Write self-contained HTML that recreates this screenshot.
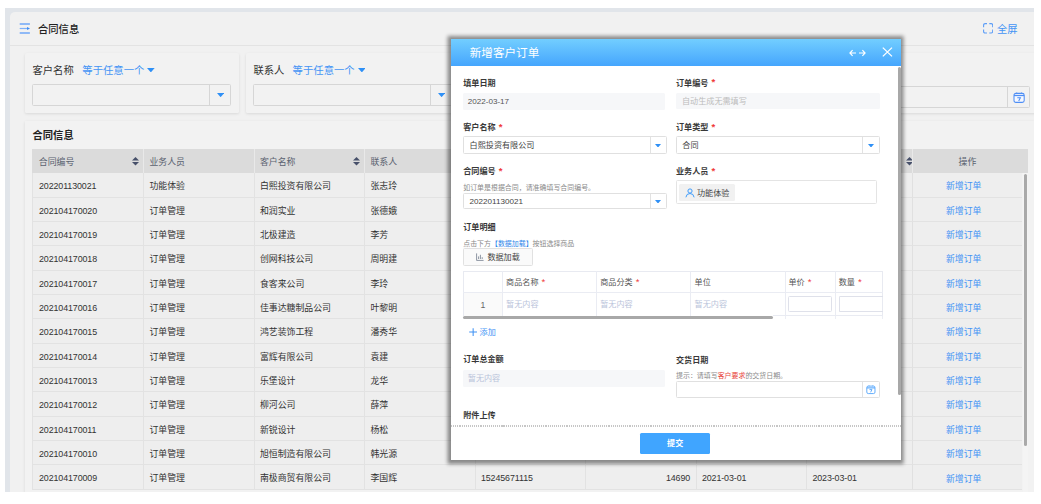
<!DOCTYPE html>
<html lang="zh-CN">
<head>
<meta charset="utf-8">
<title>合同信息</title>
<style>
*{box-sizing:border-box;margin:0;padding:0}
html,body{width:1041px;height:504px;overflow:hidden;background:#fff}
body{position:relative;font-family:"Liberation Sans","Noto Sans CJK SC",sans-serif;color:#333;font-size:8.9px;line-height:1}
.abs{position:absolute}
#app{position:absolute;left:5px;top:8px;width:1029px;height:483.5px;background:#e1e5ea;overflow:hidden}
#panel{position:absolute;left:5px;top:4px;right:0;bottom:0;background:#f1f1f1;border-top-left-radius:5px}
#stage{position:absolute;left:-5px;top:-8px;width:1041px;height:504px}
.t{position:absolute;white-space:nowrap;line-height:12px;height:12px}
.blue{color:#4494f5}
.hline{position:absolute;left:10px;right:7px;top:45px;height:1px;background:#e3e3e3}
.card{position:absolute;top:52.5px;height:60.8px;width:213.7px;background:#f2f2f2;box-shadow:0 1px 3px rgba(0,0,0,.10);border-radius:1.5px}
.sel{position:absolute;border:1px solid #d6d6d6;border-radius:1.5px;background:transparent}
.sel i{position:absolute;top:0;bottom:0;width:1px;background:#d6d6d6}
#tcard{position:absolute;left:25px;top:121px;width:1010px;height:380px;background:#f2f2f2;box-shadow:0 1px 3px rgba(0,0,0,.10)}
#thead{position:absolute;left:32.4px;top:149px;width:995.5px;height:23.6px;background:#dbdbdb}
#thead .c{position:absolute;top:0;height:23.6px;border-left:1px solid #e9e9e9;color:#5a6270;padding-left:5.4px;line-height:26.2px}
#thead .c:first-child{border-left:none;padding-left:6.4px}
.row{position:absolute;left:32.4px;width:990px;height:24.35px;background:#eeeeee;border-bottom:1px solid #e2e2e2;border-left:1px solid #e2e2e2}
.row span{position:absolute;top:0;height:24.35px;line-height:26.2px;border-left:1px solid #e2e2e2;padding-left:5.4px;white-space:nowrap}
.row span:first-child{border-left:none;padding-left:5.6px}
.n{letter-spacing:-0.1px}
#modal{position:absolute;left:451px;top:39px;width:450px;height:421px;background:#fff;box-shadow:0 .5px 3.7px 3.2px rgba(0,0,0,.43)}
#mhead{position:absolute;left:0;top:0;right:0;height:27px;background:linear-gradient(#72ceff,#45a5fd)}
#modal .t{font-size:8.1px}
.lb{font-weight:bold;color:#383838}
.req{color:#f03a3a;font-weight:bold;margin-left:.9px;font-size:9.6px;line-height:0;position:relative;top:-.3px}
.dis{position:absolute;background:#f6f7f9;border-radius:1.5px}
.msel{position:absolute;border:1px solid #e0e0e0;border-radius:1.5px;background:#fff}
.msel i{position:absolute;top:0;bottom:0;width:1px;background:#e2e2e2}
.hint{font-size:6.95px !important;color:#8a8a8a}
.ph{color:#b9c3da}
</style>
</head>
<body>
<div id="app"><div id="panel"></div>
<div id="stage">
<svg class="abs" style="left:19.2px;top:22.1px" width="12" height="12.4" viewBox="0 0 12 12.4"><g stroke="#6fa7f8" stroke-width="1.5" fill="none"><path d="M0.7 2H10.9M0.7 11H10.9"/></g><path d="M0.7 6.5H8.5" stroke="#7db0f9" stroke-width="1.2"/><path d="M8 4.9L11 6.5L8 8.1Z" fill="#3f8cf3"/></svg>
<div class="t" style="left:38px;top:23.5px;font-size:10.3px;font-weight:500;color:#222">合同信息</div>
<div class="hline"></div>
<svg class="abs" style="left:983px;top:23px" width="10.4" height="10.7" viewBox="0 0 10.4 10.7"><path d="M0.6 4.2V2.2Q0.6 0.6 2.2 0.6H4M6.3 0.6H8.1Q9.7 0.6 9.7 2.2V4.2M9.7 6.4V8.4Q9.7 10 8.1 10H6.3M4 10H2.2Q0.6 10 0.6 8.4V6.4" stroke="#5c9df7" stroke-width="1.1" fill="none"/></svg>
<div class="t blue" style="left:997px;top:23.5px;font-size:10.3px">全屏</div>
<div class="card" style="left:25px;width:213.7px"></div>
<div class="card" style="left:246px;width:213.7px"></div>
<div class="card" style="left:467px;width:213.7px"></div>
<div class="card" style="left:688px;width:360px"></div>
<div class="t" style="left:32.5px;top:64.9px;font-size:10.3px">客户名称</div>
<div class="t blue" style="left:82.3px;top:64.9px;font-size:10.35px">等于任意一个</div>
<svg class="abs" style="left:147.3px;top:67.6px" width="7.699999999999989" height="4.400000000000006" viewBox="0 0 7.699999999999989 4.400000000000006"><polygon points="0,0 7.699999999999989,0 3.8499999999999943,4.400000000000006" fill="#2f90f6"/></svg>
<div class="sel" style="left:32.4px;top:84px;width:198.8px;height:22px"><i style="left:175.3px"></i></div>
<svg class="abs" style="left:216.8px;top:93px" width="7.199999999999989" height="4.200000000000003" viewBox="0 0 7.199999999999989 4.200000000000003"><polygon points="0,0 7.199999999999989,0 3.5999999999999943,4.200000000000003" fill="#2f90f6"/></svg>
<div class="t" style="left:253.5px;top:64.9px;font-size:10.3px">联系人</div>
<div class="t blue" style="left:292.6px;top:64.9px;font-size:10.35px">等于任意一个</div>
<svg class="abs" style="left:357.8px;top:67.6px" width="7.699999999999989" height="4.400000000000006" viewBox="0 0 7.699999999999989 4.400000000000006"><polygon points="0,0 7.699999999999989,0 3.8499999999999943,4.400000000000006" fill="#2f90f6"/></svg>
<div class="sel" style="left:253.3px;top:84px;width:198.8px;height:22px"><i style="left:175.3px"></i></div>
<svg class="abs" style="left:437.6px;top:93px" width="7.199999999999989" height="4.200000000000003" viewBox="0 0 7.199999999999989 4.200000000000003"><polygon points="0,0 7.199999999999989,0 3.5999999999999943,4.200000000000003" fill="#2f90f6"/></svg>
<div class="sel" style="left:831.3px;top:86px;width:198.6px;height:22px"><i style="left:174.4px"></i></div>
<svg class="abs" style="left:1013.4px;top:91.6px" width="12.4" height="11.4" viewBox="0 0 12.4 11.4"><rect x="1" y="1.4" width="10.2" height="9" rx="1.9" fill="#f7f9ff" stroke="#4f8ff5" stroke-width="1.05"/><path d="M1 3.5H11.2" stroke="#4f8ff5" stroke-width="1.3"/><path d="M3.7 0.5V1.6M8.5 0.5V1.6" stroke="#4f8ff5" stroke-width="0.9"/><path d="M4.3 5.7H7.4L5.7 8.9" stroke="#4f8ff5" stroke-width="1.05" fill="none"/></svg>
<div id="tcard"></div>
<div class="t" style="left:32.5px;top:130.2px;font-size:10.3px;font-weight:bold;color:#222">合同信息</div>
<div id="thead"><div class="c" style="left:0.00px;width:110.65px">合同编号</div><div class="c" style="left:110.65px;width:110.50px">业务人员</div><div class="c" style="left:221.15px;width:110.50px">客户名称</div><div class="c" style="left:331.65px;width:110.50px">联系人</div><div class="c" style="left:442.15px;width:110.50px"></div><div class="c" style="left:552.65px;width:110.50px"></div><div class="c" style="left:663.15px;width:110.50px"></div><div class="c" style="left:773.65px;width:110.50px"></div><div class="c" style="left:884.15px;width:110.50px"></div></div>
<svg class="abs" style="left:131.8px;top:157px" width="7.0" height="3.5999999999999943" viewBox="0 0 7.0 3.5999999999999943"><polygon points="0,3.5999999999999943 3.5,0 7.0,3.5999999999999943" fill="#47506a"/></svg>
<svg class="abs" style="left:131.8px;top:162px" width="7.0" height="3.5999999999999943" viewBox="0 0 7.0 3.5999999999999943"><polygon points="0,0 7.0,0 3.5,3.5999999999999943" fill="#47506a"/></svg>
<svg class="abs" style="left:352.9px;top:157px" width="7.0" height="3.5999999999999943" viewBox="0 0 7.0 3.5999999999999943"><polygon points="0,3.5999999999999943 3.5,0 7.0,3.5999999999999943" fill="#47506a"/></svg>
<svg class="abs" style="left:352.9px;top:162px" width="7.0" height="3.5999999999999943" viewBox="0 0 7.0 3.5999999999999943"><polygon points="0,0 7.0,0 3.5,3.5999999999999943" fill="#47506a"/></svg>
<svg class="abs" style="left:905.6px;top:157px" width="7.0" height="3.5999999999999943" viewBox="0 0 7.0 3.5999999999999943"><polygon points="0,3.5999999999999943 3.5,0 7.0,3.5999999999999943" fill="#47506a"/></svg>
<svg class="abs" style="left:905.6px;top:162px" width="7.0" height="3.5999999999999943" viewBox="0 0 7.0 3.5999999999999943"><polygon points="0,0 7.0,0 3.5,3.5999999999999943" fill="#47506a"/></svg>
<div class="row" style="top:172.60px;height:24.95px"><span class="n" style="left:0.00px;width:110.65px;height:24.95px;line-height:27.4px">202201130021</span><span style="left:109.65px;width:110.50px;height:24.95px;line-height:27.4px">功能体验</span><span style="left:220.15px;width:110.50px;height:24.95px;line-height:27.4px">白熙投资有限公司</span><span style="left:330.65px;width:110.50px;height:24.95px;line-height:27.4px">张志玲</span><span style="left:441.15px;width:110.50px;height:24.95px;line-height:27.4px"></span><span style="left:551.65px;width:110.50px;height:24.95px;line-height:27.4px"></span><span style="left:662.15px;width:110.50px;height:24.95px;line-height:27.4px"></span><span style="left:772.65px;width:110.50px;height:24.95px;line-height:27.4px"></span></div>
<div class="row" style="top:197.55px;height:24.35px"><span class="n" style="left:0.00px;width:110.65px;height:24.35px;line-height:26.2px">202104170020</span><span style="left:109.65px;width:110.50px;height:24.35px;line-height:26.2px">订单管理</span><span style="left:220.15px;width:110.50px;height:24.35px;line-height:26.2px">和润实业</span><span style="left:330.65px;width:110.50px;height:24.35px;line-height:26.2px">张德娥</span><span style="left:441.15px;width:110.50px;height:24.35px;line-height:26.2px"></span><span style="left:551.65px;width:110.50px;height:24.35px;line-height:26.2px"></span><span style="left:662.15px;width:110.50px;height:24.35px;line-height:26.2px"></span><span style="left:772.65px;width:110.50px;height:24.35px;line-height:26.2px"></span></div>
<div class="row" style="top:221.90px;height:24.35px"><span class="n" style="left:0.00px;width:110.65px;height:24.35px;line-height:26.2px">202104170019</span><span style="left:109.65px;width:110.50px;height:24.35px;line-height:26.2px">订单管理</span><span style="left:220.15px;width:110.50px;height:24.35px;line-height:26.2px">北极建造</span><span style="left:330.65px;width:110.50px;height:24.35px;line-height:26.2px">李芳</span><span style="left:441.15px;width:110.50px;height:24.35px;line-height:26.2px"></span><span style="left:551.65px;width:110.50px;height:24.35px;line-height:26.2px"></span><span style="left:662.15px;width:110.50px;height:24.35px;line-height:26.2px"></span><span style="left:772.65px;width:110.50px;height:24.35px;line-height:26.2px"></span></div>
<div class="row" style="top:246.25px;height:24.35px"><span class="n" style="left:0.00px;width:110.65px;height:24.35px;line-height:26.2px">202104170018</span><span style="left:109.65px;width:110.50px;height:24.35px;line-height:26.2px">订单管理</span><span style="left:220.15px;width:110.50px;height:24.35px;line-height:26.2px">创网科技公司</span><span style="left:330.65px;width:110.50px;height:24.35px;line-height:26.2px">周明建</span><span style="left:441.15px;width:110.50px;height:24.35px;line-height:26.2px"></span><span style="left:551.65px;width:110.50px;height:24.35px;line-height:26.2px"></span><span style="left:662.15px;width:110.50px;height:24.35px;line-height:26.2px"></span><span style="left:772.65px;width:110.50px;height:24.35px;line-height:26.2px"></span></div>
<div class="row" style="top:270.60px;height:24.35px"><span class="n" style="left:0.00px;width:110.65px;height:24.35px;line-height:26.2px">202104170017</span><span style="left:109.65px;width:110.50px;height:24.35px;line-height:26.2px">订单管理</span><span style="left:220.15px;width:110.50px;height:24.35px;line-height:26.2px">食客来公司</span><span style="left:330.65px;width:110.50px;height:24.35px;line-height:26.2px">李玲</span><span style="left:441.15px;width:110.50px;height:24.35px;line-height:26.2px"></span><span style="left:551.65px;width:110.50px;height:24.35px;line-height:26.2px"></span><span style="left:662.15px;width:110.50px;height:24.35px;line-height:26.2px"></span><span style="left:772.65px;width:110.50px;height:24.35px;line-height:26.2px"></span></div>
<div class="row" style="top:294.95px;height:24.35px"><span class="n" style="left:0.00px;width:110.65px;height:24.35px;line-height:26.2px">202104170016</span><span style="left:109.65px;width:110.50px;height:24.35px;line-height:26.2px">订单管理</span><span style="left:220.15px;width:110.50px;height:24.35px;line-height:26.2px">佳事达糖制品公司</span><span style="left:330.65px;width:110.50px;height:24.35px;line-height:26.2px">叶黎明</span><span style="left:441.15px;width:110.50px;height:24.35px;line-height:26.2px"></span><span style="left:551.65px;width:110.50px;height:24.35px;line-height:26.2px"></span><span style="left:662.15px;width:110.50px;height:24.35px;line-height:26.2px"></span><span style="left:772.65px;width:110.50px;height:24.35px;line-height:26.2px"></span></div>
<div class="row" style="top:319.30px;height:24.35px"><span class="n" style="left:0.00px;width:110.65px;height:24.35px;line-height:26.2px">202104170015</span><span style="left:109.65px;width:110.50px;height:24.35px;line-height:26.2px">订单管理</span><span style="left:220.15px;width:110.50px;height:24.35px;line-height:26.2px">鸿艺装饰工程</span><span style="left:330.65px;width:110.50px;height:24.35px;line-height:26.2px">潘秀华</span><span style="left:441.15px;width:110.50px;height:24.35px;line-height:26.2px"></span><span style="left:551.65px;width:110.50px;height:24.35px;line-height:26.2px"></span><span style="left:662.15px;width:110.50px;height:24.35px;line-height:26.2px"></span><span style="left:772.65px;width:110.50px;height:24.35px;line-height:26.2px"></span></div>
<div class="row" style="top:343.65px;height:24.35px"><span class="n" style="left:0.00px;width:110.65px;height:24.35px;line-height:26.2px">202104170014</span><span style="left:109.65px;width:110.50px;height:24.35px;line-height:26.2px">订单管理</span><span style="left:220.15px;width:110.50px;height:24.35px;line-height:26.2px">富辉有限公司</span><span style="left:330.65px;width:110.50px;height:24.35px;line-height:26.2px">袁建</span><span style="left:441.15px;width:110.50px;height:24.35px;line-height:26.2px"></span><span style="left:551.65px;width:110.50px;height:24.35px;line-height:26.2px"></span><span style="left:662.15px;width:110.50px;height:24.35px;line-height:26.2px"></span><span style="left:772.65px;width:110.50px;height:24.35px;line-height:26.2px"></span></div>
<div class="row" style="top:368.00px;height:24.35px"><span class="n" style="left:0.00px;width:110.65px;height:24.35px;line-height:26.2px">202104170013</span><span style="left:109.65px;width:110.50px;height:24.35px;line-height:26.2px">订单管理</span><span style="left:220.15px;width:110.50px;height:24.35px;line-height:26.2px">乐堡设计</span><span style="left:330.65px;width:110.50px;height:24.35px;line-height:26.2px">龙华</span><span style="left:441.15px;width:110.50px;height:24.35px;line-height:26.2px"></span><span style="left:551.65px;width:110.50px;height:24.35px;line-height:26.2px"></span><span style="left:662.15px;width:110.50px;height:24.35px;line-height:26.2px"></span><span style="left:772.65px;width:110.50px;height:24.35px;line-height:26.2px"></span></div>
<div class="row" style="top:392.35px;height:24.35px"><span class="n" style="left:0.00px;width:110.65px;height:24.35px;line-height:26.2px">202104170012</span><span style="left:109.65px;width:110.50px;height:24.35px;line-height:26.2px">订单管理</span><span style="left:220.15px;width:110.50px;height:24.35px;line-height:26.2px">柳河公司</span><span style="left:330.65px;width:110.50px;height:24.35px;line-height:26.2px">薛萍</span><span style="left:441.15px;width:110.50px;height:24.35px;line-height:26.2px"></span><span style="left:551.65px;width:110.50px;height:24.35px;line-height:26.2px"></span><span style="left:662.15px;width:110.50px;height:24.35px;line-height:26.2px"></span><span style="left:772.65px;width:110.50px;height:24.35px;line-height:26.2px"></span></div>
<div class="row" style="top:416.70px;height:24.35px"><span class="n" style="left:0.00px;width:110.65px;height:24.35px;line-height:26.2px">202104170011</span><span style="left:109.65px;width:110.50px;height:24.35px;line-height:26.2px">订单管理</span><span style="left:220.15px;width:110.50px;height:24.35px;line-height:26.2px">新锐设计</span><span style="left:330.65px;width:110.50px;height:24.35px;line-height:26.2px">杨松</span><span style="left:441.15px;width:110.50px;height:24.35px;line-height:26.2px"></span><span style="left:551.65px;width:110.50px;height:24.35px;line-height:26.2px"></span><span style="left:662.15px;width:110.50px;height:24.35px;line-height:26.2px"></span><span style="left:772.65px;width:110.50px;height:24.35px;line-height:26.2px"></span></div>
<div class="row" style="top:441.05px;height:24.35px"><span class="n" style="left:0.00px;width:110.65px;height:24.35px;line-height:26.2px">202104170010</span><span style="left:109.65px;width:110.50px;height:24.35px;line-height:26.2px">订单管理</span><span style="left:220.15px;width:110.50px;height:24.35px;line-height:26.2px">旭恒制造有限公司</span><span style="left:330.65px;width:110.50px;height:24.35px;line-height:26.2px">韩光源</span><span style="left:441.15px;width:110.50px;height:24.35px;line-height:26.2px"></span><span style="left:551.65px;width:110.50px;height:24.35px;line-height:26.2px"></span><span style="left:662.15px;width:110.50px;height:24.35px;line-height:26.2px"></span><span style="left:772.65px;width:110.50px;height:24.35px;line-height:26.2px"></span></div>
<div class="row" style="top:465.40px;height:24.35px"><span class="n" style="left:0.00px;width:110.65px;height:24.35px;line-height:26.2px">202104170009</span><span style="left:109.65px;width:110.50px;height:24.35px;line-height:26.2px">订单管理</span><span style="left:220.15px;width:110.50px;height:24.35px;line-height:26.2px">南极商贸有限公司</span><span style="left:330.65px;width:110.50px;height:24.35px;line-height:26.2px">李国辉</span><span class="n" style="left:441.15px;width:110.50px;height:24.35px;line-height:26.2px">15245671115</span><span class="n" style="left:551.65px;width:110.50px;height:24.35px;line-height:26.2px;text-align:right;padding-right:5.4px">14690</span><span class="n" style="left:662.15px;width:110.50px;height:24.35px;line-height:26.2px">2021-03-01</span><span class="n" style="left:772.65px;width:110.50px;height:24.35px;line-height:26.2px">2023-03-01</span></div>
<div class="abs" style="left:912.4px;top:149px;width:115.5px;height:23.6px;background:#dbdbdb;border-left:1px solid #e9e9e9"></div>
<div class="t" style="left:958.6px;top:156.1px;color:#5a6270">操作</div>
<div class="abs" style="left:912.4px;top:172.60px;width:110.1px;height:24.95px;background:#eeeeee;border-left:1px solid #e0e0e0;border-bottom:1px solid #e2e2e2"></div>
<div class="t blue" style="left:946px;top:180.30px">新增订单</div>
<div class="abs" style="left:912.4px;top:197.55px;width:110.1px;height:24.35px;background:#eeeeee;border-left:1px solid #e0e0e0;border-bottom:1px solid #e2e2e2"></div>
<div class="t blue" style="left:946px;top:204.65px">新增订单</div>
<div class="abs" style="left:912.4px;top:221.90px;width:110.1px;height:24.35px;background:#eeeeee;border-left:1px solid #e0e0e0;border-bottom:1px solid #e2e2e2"></div>
<div class="t blue" style="left:946px;top:229.00px">新增订单</div>
<div class="abs" style="left:912.4px;top:246.25px;width:110.1px;height:24.35px;background:#eeeeee;border-left:1px solid #e0e0e0;border-bottom:1px solid #e2e2e2"></div>
<div class="t blue" style="left:946px;top:253.35px">新增订单</div>
<div class="abs" style="left:912.4px;top:270.60px;width:110.1px;height:24.35px;background:#eeeeee;border-left:1px solid #e0e0e0;border-bottom:1px solid #e2e2e2"></div>
<div class="t blue" style="left:946px;top:277.70px">新增订单</div>
<div class="abs" style="left:912.4px;top:294.95px;width:110.1px;height:24.35px;background:#eeeeee;border-left:1px solid #e0e0e0;border-bottom:1px solid #e2e2e2"></div>
<div class="t blue" style="left:946px;top:302.05px">新增订单</div>
<div class="abs" style="left:912.4px;top:319.30px;width:110.1px;height:24.35px;background:#eeeeee;border-left:1px solid #e0e0e0;border-bottom:1px solid #e2e2e2"></div>
<div class="t blue" style="left:946px;top:326.40px">新增订单</div>
<div class="abs" style="left:912.4px;top:343.65px;width:110.1px;height:24.35px;background:#eeeeee;border-left:1px solid #e0e0e0;border-bottom:1px solid #e2e2e2"></div>
<div class="t blue" style="left:946px;top:350.75px">新增订单</div>
<div class="abs" style="left:912.4px;top:368.00px;width:110.1px;height:24.35px;background:#eeeeee;border-left:1px solid #e0e0e0;border-bottom:1px solid #e2e2e2"></div>
<div class="t blue" style="left:946px;top:375.10px">新增订单</div>
<div class="abs" style="left:912.4px;top:392.35px;width:110.1px;height:24.35px;background:#eeeeee;border-left:1px solid #e0e0e0;border-bottom:1px solid #e2e2e2"></div>
<div class="t blue" style="left:946px;top:399.45px">新增订单</div>
<div class="abs" style="left:912.4px;top:416.70px;width:110.1px;height:24.35px;background:#eeeeee;border-left:1px solid #e0e0e0;border-bottom:1px solid #e2e2e2"></div>
<div class="t blue" style="left:946px;top:423.80px">新增订单</div>
<div class="abs" style="left:912.4px;top:441.05px;width:110.1px;height:24.35px;background:#eeeeee;border-left:1px solid #e0e0e0;border-bottom:1px solid #e2e2e2"></div>
<div class="t blue" style="left:946px;top:448.15px">新增订单</div>
<div class="abs" style="left:912.4px;top:465.40px;width:110.1px;height:24.35px;background:#eeeeee;border-left:1px solid #e0e0e0;border-bottom:1px solid #e2e2e2"></div>
<div class="t blue" style="left:946px;top:472.50px">新增订单</div>
<div class="abs" style="left:1022.5px;top:172.6px;width:5.4px;height:330px;background:#f4f4f4"></div>
<div class="abs" style="left:1023.7px;top:174px;width:3.5px;height:271.5px;background:#a9a9a9;border-radius:2px"></div>
<div id="modal"><div id="mhead"></div>
<div class="t" style="left:18.70px;top:7.10px;font-size:11.6px !important;color:#fff;line-height:14px;height:14px">新增客户订单</div>
<svg class="abs" style="left:398.00px;top:9.70px" width="17" height="8" viewBox="0 0 17 8"><path d="M0.9 4H7M3.6 1.2L0.9 4L3.6 6.8M10 4H16.1M13.4 1.2L16.1 4L13.4 6.8" stroke="#fff" stroke-width="1.15" fill="none"/></svg>
<svg class="abs" style="left:430.80px;top:7.80px" width="11" height="10" viewBox="0 0 11 10"><path d="M0.8 0.6L10 9.4M10 0.6L0.8 9.4" stroke="#fff" stroke-width="1.3" fill="none"/></svg>
<div class="abs" style="left:447.10px;top:27.90px;width:2.9px;height:328.5px;background:#a8a8a8;border-radius:1.5px"></div>
<div class="t lb" style="left:12.20px;top:38.50px">填单日期</div>
<div class="dis" style="left:12.20px;top:53.50px;width:201.50px;height:17.00px"></div>
<div class="t " style="left:16.70px;top:57.00px;color:#555">2022-03-17</div>
<div class="t lb" style="left:225.00px;top:38.50px">订单编号 <span class="req">*</span></div>
<div class="dis" style="left:225.00px;top:53.90px;width:203.70px;height:16.60px"></div>
<div class="t " style="left:231.00px;top:57.00px;color:#bcbcbc">自动生成无需填写</div>
<div class="t lb" style="left:12.20px;top:82.80px">客户名称 <span class="req">*</span></div>
<div class="msel" style="left:12.20px;top:97.30px;width:204.10px;height:17.30px"><i style="left:185.50px"></i></div>
<div class="t " style="left:18.60px;top:101.00px;color:#444">白熙投资有限公司</div>
<svg class="abs" style="left:203.8px;top:104.7px" width="6.0" height="3.5999999999999943" viewBox="0 0 6.0 3.5999999999999943"><polygon points="0,0 6.0,0 3.0,3.5999999999999943" fill="#2f90f6"/></svg>
<div class="t lb" style="left:225.00px;top:82.80px">订单类型 <span class="req">*</span></div>
<div class="msel" style="left:225.00px;top:97.40px;width:203.70px;height:17.40px"><i style="left:185.40px"></i></div>
<div class="t " style="left:231.30px;top:101.10px;color:#444">合同</div>
<svg class="abs" style="left:416.7px;top:104.7px" width="6.0" height="3.5999999999999943" viewBox="0 0 6.0 3.5999999999999943"><polygon points="0,0 6.0,0 3.0,3.5999999999999943" fill="#2f90f6"/></svg>
<div class="t lb" style="left:12.20px;top:126.80px">合同编号 <span class="req">*</span></div>
<div class="t hint" style="left:12.20px;top:142.80px;">如订单是根据合同，请准确填写合同编号。</div>
<div class="msel" style="left:12.20px;top:154.00px;width:204.10px;height:16.40px"><i style="left:185.50px"></i></div>
<div class="t " style="left:18.60px;top:157.20px;color:#444">202201130021</div>
<svg class="abs" style="left:203.8px;top:160.8px" width="6.0" height="3.5999999999999943" viewBox="0 0 6.0 3.5999999999999943"><polygon points="0,0 6.0,0 3.0,3.5999999999999943" fill="#2f90f6"/></svg>
<div class="t lb" style="left:225.00px;top:127.10px">业务人员 <span class="req">*</span></div>
<div class="abs" style="left:225.00px;top:141.30px;width:201.3px;height:23.6px;border:1px solid #e4e4e4;border-radius:1.5px"></div>
<div class="abs" style="left:228.00px;top:144.60px;width:56.3px;height:17.8px;background:#f1f1f1;border-radius:1.5px"></div>
<svg class="abs" style="left:233.60px;top:148.50px" width="10" height="10" viewBox="0 0 10 10"><circle cx="5" cy="3" r="2.1" stroke="#3f9cfb" stroke-width="1" fill="none"/><path d="M0.9 9.3Q1.3 5.5 5 5.5Q8.7 5.5 9.1 9.3" stroke="#3f9cfb" stroke-width="1" fill="none"/></svg>
<div class="t " style="left:246.00px;top:148.80px;color:#444">功能体验</div>
<div class="t lb" style="left:12.20px;top:182.80px">订单明细</div>
<div class="t hint" style="left:12.20px;top:198.80px">点击下方<span style="color:#2f87ea">【数据加载】</span>按钮选择商品</div>
<div class="abs" style="left:12.20px;top:209.40px;width:69.7px;height:17.6px;border:1px solid #e1e1e1;border-radius:1.5px;background:#fafafa"></div>
<svg class="abs" style="left:25.30px;top:214.20px" width="8" height="8" viewBox="0 0 8 8"><path d="M0.6 0.4V7.4H7.6M2.6 6V3.4M4.4 6V1.8M6.2 6V4.2" stroke="#6a7486" stroke-width="0.75" fill="none"/></svg>
<div class="t " style="left:36.40px;top:212.80px;color:#444">数据加载</div>
<div class="abs" style="left:12.20px;top:232.40px;width:419.50px;height:44.6px;border:1px solid #e8eaf1;border-bottom:none"></div>
<div class="abs" style="left:12.20px;top:253.30px;width:419.50px;height:1px;background:#eaecf3"></div>
<div class="abs" style="left:51.40px;top:232.40px;width:1px;height:44.6px;background:#eaecf3"></div>
<div class="abs" style="left:145.20px;top:232.40px;width:1px;height:44.6px;background:#eaecf3"></div>
<div class="abs" style="left:239.40px;top:232.40px;width:1px;height:44.6px;background:#eaecf3"></div>
<div class="abs" style="left:333.50px;top:232.40px;width:1px;height:44.6px;background:#eaecf3"></div>
<div class="abs" style="left:384.40px;top:232.40px;width:1px;height:44.6px;background:#eaecf3"></div>
<div class="t " style="left:55.10px;top:237.80px;color:#555">商品名称 <span class="req" style="font-weight:normal">*</span></div>
<div class="t " style="left:149.20px;top:237.80px;color:#555">商品分类 <span class="req" style="font-weight:normal">*</span></div>
<div class="t " style="left:243.60px;top:237.80px;color:#555">单位</div>
<div class="t " style="left:337.40px;top:237.80px;color:#555">单价 <span class="req" style="font-weight:normal">*</span></div>
<div class="t " style="left:387.70px;top:237.80px;color:#555">数量 <span class="req" style="font-weight:normal">*</span></div>
<div class="abs" style="left:13.20px;top:254.30px;width:38.2px;height:22.7px;background:#fafafa"></div>
<div class="t " style="left:29.60px;top:260.40px;color:#666;font-size:8.7px !important">1</div>
<div class="t ph" style="left:55.10px;top:260.20px;">暂无内容</div>
<div class="t ph" style="left:149.20px;top:260.20px;">暂无内容</div>
<div class="t ph" style="left:243.60px;top:260.20px;">暂无内容</div>
<div class="abs" style="left:337.40px;top:256.90px;width:43.4px;height:16.5px;border:1px solid #dfe1ea;border-radius:1.5px"></div>
<div class="abs" style="left:388.30px;top:256.90px;width:43.4px;height:16.5px;border:1px solid #dfe1ea;border-right:none;border-radius:1.5px 0 0 1.5px"></div>
<div class="abs" style="left:322.00px;top:276.30px;width:109.70px;height:1px;background:#e9ebf2"></div>
<div class="abs" style="left:333.50px;top:276.50px;width:1px;height:3.6px;background:#eceef4"></div>
<div class="abs" style="left:384.40px;top:276.50px;width:1px;height:3.6px;background:#eceef4"></div>
<div class="abs" style="left:430.70px;top:276.50px;width:1px;height:3.6px;background:#eceef4"></div>
<div class="abs" style="left:12.20px;top:277.00px;width:310.20px;height:3.2px;background:#a8a8a8;border-radius:1.6px"></div>
<svg class="abs" style="left:17.60px;top:289.30px" width="8.4" height="8.4" viewBox="0 0 8.4 8.4"><path d="M0.2 4.1H8.1M4.15 0.2V8.1" stroke="#4092f4" stroke-width="1.05"/></svg>
<div class="t blue" style="left:28.60px;top:287.90px;">添加</div>
<div class="t lb" style="left:12.20px;top:315.10px">订单总金额</div>
<div class="dis" style="left:12.20px;top:330.50px;width:201.50px;height:17.00px"></div>
<div class="t ph" style="left:16.80px;top:334.00px;">暂无内容</div>
<div class="t lb" style="left:225.00px;top:315.60px">交货日期</div>
<div class="t hint" style="left:225.00px;top:331.30px">提示：请填写<span style="color:#e8453c">客户要求</span>的交货日期。</div>
<div class="msel" style="left:225.00px;top:342.20px;width:203.70px;height:16.80px"><i style="left:185.10px"></i></div>
<svg class="abs" style="left:415.10px;top:346.20px" width="10" height="9.4" viewBox="0 0 10 9.4"><rect x="0.8" y="1.1" width="8.2" height="7.5" rx="1.5" fill="#fff" stroke="#52a5fc" stroke-width="0.9"/><path d="M0.8 2.9H9" stroke="#52a5fc" stroke-width="1.1"/><path d="M3 0.4V1.3M6.8 0.4V1.3" stroke="#52a5fc" stroke-width="0.8"/><path d="M3.5 4.6H6L4.6 7.3" stroke="#52a5fc" stroke-width="0.9" fill="none"/></svg>
<div class="t lb" style="left:12.20px;top:371.20px">附件上传</div>
<div class="abs" style="left:0;top:386.40px;width:450px;height:1.4px;background:repeating-linear-gradient(90deg,#c6c6c6 0 1.1px,transparent 1.1px 2.1px)"></div>
<div class="abs" style="left:189.30px;top:394.00px;width:69.7px;height:20.9px;background:#40a5ff;border-radius:1.5px;color:#fff;font-weight:bold;font-size:8.1px;text-align:center;line-height:21.6px">提交</div>
</div>
</div>
</div>
</body>
</html>
